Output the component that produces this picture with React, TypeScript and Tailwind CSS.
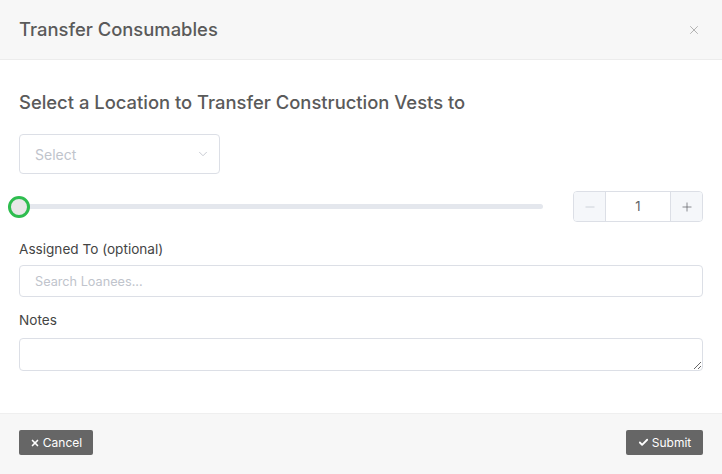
import React, { useState } from 'react';
import { X, ChevronDown, Minus, Plus, Check } from 'lucide-react';

const font = { fontFamily: 'Inter, "Liberation Sans", sans-serif' };

export default function App() {
  const [qty, setQty] = useState(1);

  return (
    <div className="w-[722px] h-[474px] bg-white flex flex-col text-[#555]" style={font}>
      {/* Header */}
      <div className="h-[60px] shrink-0 bg-[#f7f7f7] border-b border-[#ececec] flex items-center justify-between pl-[19px] pr-[21px]">
        <h2 className="text-[18.4px] text-[#5a5a5a] font-medium">Transfer Consumables</h2>
        <button className="text-[#999]">
          <X className="h-[14px] w-[14px]" strokeWidth={1.25} />
        </button>
      </div>

      {/* Body */}
      <div className="flex-1 px-[19px] pt-[30px]">
        <h3 className="text-[18.4px] leading-[24px] text-[#5a5a5a] font-medium">
          Select a Location to Transfer Construction Vests to
        </h3>

        <div className="mt-[20px] w-[201px] h-[40px] border border-[#dcdfe6] rounded-[4px] flex items-center justify-between pl-[15px] pr-[9px]">
          <span className="text-[14px] text-[#c0c4cc]">Select</span>
          <ChevronDown className="h-[14px] w-[14px] text-[#c0c4cc]" strokeWidth={1.5} />
        </div>

        <div className="mt-[17px] flex items-center justify-between">
          <div className="relative w-[524px] h-[30px] flex items-center">
            <div className="w-full h-[5px] rounded-full bg-[#e4e7ed]" />
            <div className="absolute left-[-11px] top-[4px] h-[22px] w-[22px] rounded-full border-[3px] border-[#2ebd4f] bg-[#e8e8e8]" />
          </div>
          <div className="w-[130px] h-[31px] border border-[#dcdfe6] rounded-[4px] flex overflow-hidden">
            <button
              className="w-[32px] bg-[#f5f7fa] border-r border-[#dcdfe6] flex items-center justify-center text-[#c0c4cc]"
              onClick={() => setQty(q => Math.max(1, q - 1))}
            >
              <Minus className="h-[14px] w-[14px]" strokeWidth={1.25} />
            </button>
            <div className="flex-1 flex items-center justify-center text-[13px] text-[#606266]">{qty}</div>
            <button
              className="w-[32px] bg-[#f5f7fa] border-l border-[#dcdfe6] flex items-center justify-center text-[#606266]"
              onClick={() => setQty(q => q + 1)}
            >
              <Plus className="h-[14px] w-[14px]" strokeWidth={1.25} />
            </button>
          </div>
        </div>

        <label className="block mt-[17px] text-[13.6px] text-[#444]">Assigned To (optional)</label>
        <input
          className="mt-[6px] w-full h-[32px] border border-[#dcdfe6] rounded-[4px] px-[15px] text-[12.7px] placeholder-[#c0c4cc] outline-none"
          placeholder="Search Loanees..."
        />

        <label className="block mt-[13px] text-[13.6px] text-[#444]">Notes</label>
        <textarea
          className="block mt-[7px] w-full h-[33px] border border-[#dcdfe6] rounded-[4px] px-[15px] text-[13px] outline-none"
        />
      </div>

      {/* Footer */}
      <div className="h-[61px] shrink-0 bg-[#f7f7f7] border-t border-[#efefef] flex items-start justify-between px-[19px] pt-[16px]">
        <button className="h-[25px] w-[74px] bg-[#666] rounded-[2px] text-white text-[12px] flex items-center justify-center gap-[3px]">
          <X className="h-[10px] w-[10px]" strokeWidth={4} />
          Cancel
        </button>
        <button className="h-[25px] w-[77px] bg-[#666] rounded-[2px] text-white text-[12px] flex items-center justify-center gap-[3px]">
          <Check className="h-[11px] w-[11px]" strokeWidth={4} />
          Submit
        </button>
      </div>
    </div>
  );
}
